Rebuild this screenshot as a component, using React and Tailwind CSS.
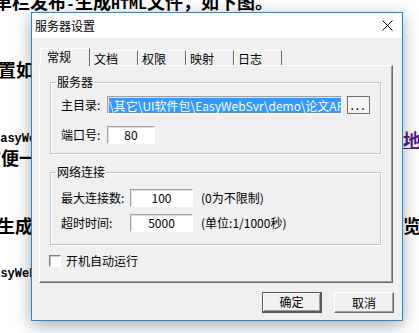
import React from 'react';

const TABS = ['文档', '权限', '映射', '日志'];

const sunken = 'bg-white border border-t-[#a0a0a0] border-l-[#a0a0a0] border-r-white border-b-white shadow-[inset_1px_1px_0_#e3e3e3]';
const raised = 'border border-t-white border-l-white border-r-[#696969] border-b-[#696969] shadow-[inset_-1px_-1px_0_#a0a0a0]';

const Group = ({ title, height, children }) => (
  <fieldset
    className="w-[331px] border border-[#c4c4c4] shadow-[inset_1px_1px_0_#fff,1px_1px_0_#fff] p-0 m-0"
    style={{ height }}
  >
    <legend className="ml-[5px] px-[1px] leading-[14px]">{title}</legend>
    {children}
  </fieldset>
);

const App = () => {
  return (
    <div className="relative w-[419px] h-[333px] overflow-hidden bg-white text-black font-['Noto_Sans_CJK_SC',sans-serif]">
      {/* document behind the dialog */}
      <div className="flex flex-col -mt-[8px] font-bold text-[18px] leading-[18px] whitespace-nowrap">
        <div className="h-[18px] -ml-[24px]">
          菜单栏发布<span className="font-['Liberation_Mono',monospace] text-[15px]">-</span>生成<span className="font-['Liberation_Mono',monospace] text-[15px]">HTML</span>文件，如下图。
        </div>
        <div className="h-[18px] mt-[50px] -ml-[20px]">设置如下：</div>
        <div className="h-[18px] mt-[52px] flex items-center">
          <span className="w-[403px] shrink-0 -ml-[7px] pl-0 text-[12px] font-['Liberation_Mono',monospace]">EasyWebSvr</span>
          <span className="ml-[7px] text-[#551a8b] underline">地址</span>
        </div>
        <div className="h-[18px] -ml-[17px]">方便一</div>
        <div className="h-[18px] mt-[50px] flex items-center">
          <span className="w-[403px] shrink-0 -ml-[3px]">生成</span>
          <span className="ml-[3px]">览：</span>
        </div>
        <div className="h-[18px] mt-[31px] -ml-[14px] flex items-center text-[12px] font-['Liberation_Mono',monospace]">EasyWebSvr</div>
      </div>

      {/* dialog */}
      <div className="absolute left-[31px] top-[12px] w-[372px] h-[309px] border border-[#1e88e0] bg-[#f0f0f0] shadow-[0_4px_16px_rgba(0,0,0,0.35)] flex flex-col text-[12px] leading-[14px]">
        <div className="h-[25px] shrink-0 bg-white flex items-center justify-between pl-[3px] pr-[9px]">
          <span>服务器设置</span>
          <svg width="11" height="11" viewBox="0 0 11 11">
            <path d="M0.5 0.5 L10.5 10.5 M10.5 0.5 L0.5 10.5" stroke="#000" strokeWidth="1" />
          </svg>
        </div>

        <div className="flex-1 flex flex-col pt-[10px] pl-[7px]">
          {/* tabs */}
          <div className="h-[17px] flex items-end pl-[1px]">
            <div className="relative z-10 w-[50px] h-[18px] -mb-[1px] bg-[#f0f0f0] border-t border-l border-white border-r border-r-[#696969] pl-[6px] pt-[1px]">
              常规
            </div>
            {TABS.map((t) => (
              <div key={t} className="w-[48px] h-[15px] border-t border-l border-white border-r border-r-[#696969] pl-[3px] leading-[15px]">
                {t}
              </div>
            ))}
          </div>

          {/* panel */}
          <div className={`w-[354px] h-[218px] ${raised} pt-[9px] pl-[10px]`}>
            <Group title="服务器" height="79px">
              <div className="flex flex-col gap-[12px] pt-[7px] pl-[10px]">
                <div className="h-[18px] flex items-center">
                  <span className="w-[46px]">主目录:</span>
                  <div className={`w-[235px] h-[18px] ${sunken} overflow-hidden flex items-center pl-[1px]`}>
                    <span className="bg-[#3399ff] text-white whitespace-nowrap leading-[15px]">\其它\UI软件包\EasyWebSvr\demo\论文APP</span>
                  </div>
                  <div className="ml-[5px] w-[23px] h-[18px] border border-[#707070] bg-[#f5f5f5] flex items-center justify-center tracking-[2px] leading-[10px]">
                    ...
                  </div>
                </div>
                <div className="h-[18px] flex items-center">
                  <span className="w-[46px]">端口号:</span>
                  <div className={`w-[48px] h-[18px] ${sunken} flex items-center justify-center`}>80</div>
                </div>
              </div>
            </Group>

            <div className="mt-[11px]">
              <Group title="网络连接" height="80px">
                <div className="flex flex-col gap-[7px] pt-[10px] pl-[10px]">
                  <div className="h-[18px] flex items-center">
                    <span className="w-[69px]">最大连接数:</span>
                    <div className={`w-[63px] h-[18px] ${sunken} flex items-center justify-center`}>100</div>
                    <span className="ml-[8px]">(0为不限制)</span>
                  </div>
                  <div className="h-[18px] flex items-center">
                    <span className="w-[69px]">超时时间:</span>
                    <div className={`w-[63px] h-[18px] ${sunken} flex items-center justify-center`}>5000</div>
                    <span className="ml-[8px]">(单位:1/1000秒)</span>
                  </div>
                </div>
              </Group>
            </div>

            <div className="mt-[9px] h-[14px] flex items-center -ml-[1px]">
              <div className="w-[12px] h-[12px] bg-white border border-t-[#808080] border-l-[#808080] border-r-white border-b-white shadow-[inset_1px_1px_0_#c8c8c8]" />
              <span className="ml-[5px]">开机自动运行</span>
            </div>
          </div>

          {/* buttons */}
          <div className="mt-[9px] flex justify-end gap-[12px] pr-[8px]">
            <div className="w-[60px] h-[21px] border border-[#5a5a5a] border-r-2 border-b-2 shadow-[inset_1px_1px_0_#fff,inset_-1px_-1px_0_#a0a0a0] flex items-center justify-center">
              确定
            </div>
            <div className={`w-[60px] h-[21px] ${raised} flex items-center justify-center`}>取消</div>
          </div>
        </div>
      </div>
    </div>
  );
};

export default App;
